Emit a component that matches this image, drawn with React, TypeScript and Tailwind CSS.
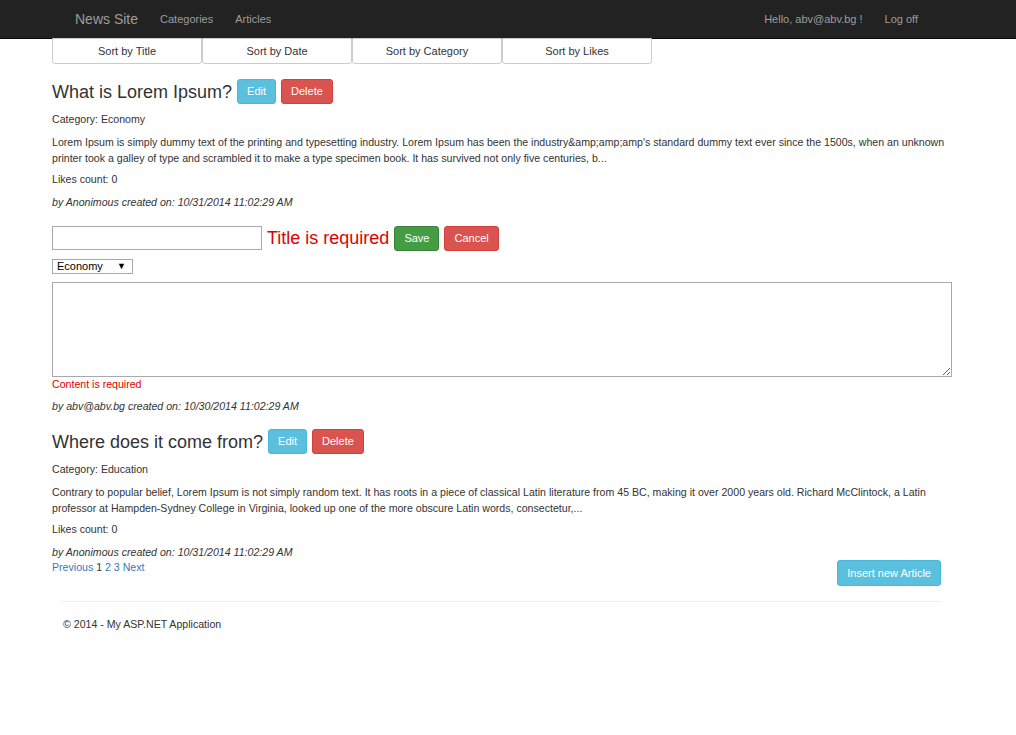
import React from "react";

const FONT = { fontFamily: '"Liberation Sans", Arial, sans-serif' };

function Btn({ color, children, className = "" }: { color: string; children: React.ReactNode; className?: string }) {
  return (
    <button className={`h-[25px] rounded-[3px] px-[9px] text-[11px] text-white ${color} ${className}`}>
      {children}
    </button>
  );
}

function Article({ title, category, body, by }: { title: string; category: string; body: string; by: string }) {
  return (
    <div>
      <div className="flex h-[25px] items-center gap-[5px]">
        <h3 className="text-[18px] leading-none text-[#333]">{title}</h3>
        <Btn color="bg-[#5bc0de] border border-[#46b8da]">Edit</Btn>
        <Btn color="bg-[#d9534f] border border-[#d43f3a]">Delete</Btn>
      </div>
      <p className="mt-[7px] leading-[16px]">Category: {category}</p>
      <p className="mt-[7px] leading-[16px]">{body}</p>
      <p className="mt-[5px] leading-[16px]">Likes count: 0</p>
      <p className="mt-[7px] italic leading-[16px]">{by}</p>
    </div>
  );
}

export default function App() {
  const sorts = ["Sort by Title", "Sort by Date", "Sort by Category", "Sort by Likes"];
  return (
    <div className="min-h-[735px] bg-white text-[10.6px] text-[#333]" style={FONT}>
      <nav className="flex h-[39px] items-center border-b border-[#080808] bg-[#222] pl-[75px] pr-[98px] text-[11px] text-[#9d9d9d]">
        <span className="text-[14px]">News Site</span>
        <span className="ml-[22px]">Categories</span>
        <span className="ml-[22px]">Articles</span>
        <span className="ml-auto">Hello, abv@abv.bg !</span>
        <span className="ml-[22px]">Log off</span>
      </nav>

      <main className="box-content w-[900px] pl-[52px]">
        <div className="flex">
          {sorts.map((s) => (
            <button
              key={s}
              className="-mt-px h-[26px] w-[150px] rounded-b-[3px] border border-[#ccc] bg-white text-[11px] text-[#333]"
            >
              {s}
            </button>
          ))}
        </div>

        <div className="mt-[15px]">
          <Article
            title="What is Lorem Ipsum?"
            category="Economy"
            body={
              "Lorem Ipsum is simply dummy text of the printing and typesetting industry. Lorem Ipsum has been the industry&amp;amp;amp's standard dummy text ever since the 1500s, when an unknown printer took a galley of type and scrambled it to make a type specimen book. It has survived not only five centuries, b..."
            }
            by="by Anonimous created on: 10/31/2014 11:02:29 AM"
          />
        </div>

        <div className="mt-[15px] flex h-[26px] items-center">
          <input className="h-[24px] w-[210px] border border-[#a9a9a9] bg-white" />
          <span className="ml-[5px] text-[18px] text-[#e00000]">Title is required</span>
          <Btn color="ml-[5px] bg-[#449d44] border border-[#398439]">Save</Btn>
          <Btn color="ml-[5px] bg-[#d9534f] border border-[#d43f3a]">Cancel</Btn>
        </div>
        <div className="mt-[8px] flex h-[15px] w-[81px] items-center justify-between border border-[#a9a9a9] pl-[4px] pr-[6px] text-[11px] text-black">
          <span>Economy</span>
          <span className="text-[9px]">▼</span>
        </div>
        <textarea className="mt-[8px] block h-[95px] w-[900px] border border-[#a9a9a9]" />
        <p className="leading-[14px] text-[#e00000]">Content is required</p>
        <p className="mt-[7px] italic leading-[16px]">by abv@abv.bg created on: 10/30/2014 11:02:29 AM</p>

        <div className="mt-[15px]">
          <Article
            title="Where does it come from?"
            category="Education"
            body="Contrary to popular belief, Lorem Ipsum is not simply random text. It has roots in a piece of classical Latin literature from 45 BC, making it over 2000 years old. Richard McClintock, a Latin professor at Hampden-Sydney College in Virginia, looked up one of the more obscure Latin words, consectetur,..."
            by="by Anonimous created on: 10/31/2014 11:02:29 AM"
          />
        </div>

        <div className="flex items-start justify-between pr-[11px]">
          <p className="leading-[14px] text-[#337ab7]">
            Previous <span className="text-[#333]">1</span> 2 3 Next
          </p>
          <Btn color="bg-[#5bc0de] border border-[#46b8da]" className="h-[26px]">
            Insert new Article
          </Btn>
        </div>

        <div className="mx-[10px] mt-[15px] border-t border-[#eee]" />
        <p className="ml-[11px] mt-[14px] leading-[16px]">© 2014 - My ASP.NET Application</p>
      </main>
    </div>
  );
}
